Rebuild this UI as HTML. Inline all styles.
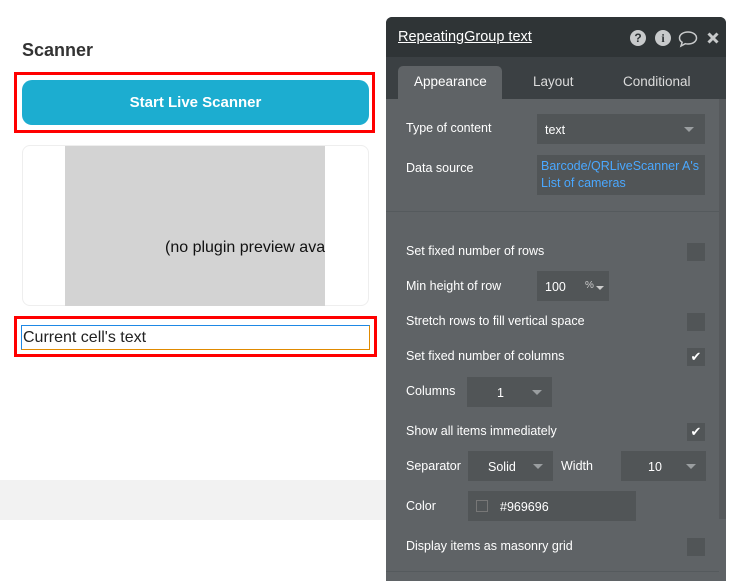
<!DOCTYPE html>
<html><head><meta charset="utf-8"><style>
*{margin:0;padding:0;box-sizing:border-box}
body{width:731px;height:581px;overflow:hidden;background:#fff;font-family:"Liberation Sans",sans-serif;position:relative}
.a{position:absolute}
.lbl{position:absolute;left:20px;color:#fff;font-size:12.5px}
.inp{position:absolute;background:#515557;color:#fff;font-size:12.5px}
.chk{position:absolute;left:301px;width:18px;height:18px;background:#515557;color:#fff;font-size:13px;text-align:center;line-height:18px}
.arr{position:absolute;width:0;height:0;border-left:5px solid transparent;border-right:5px solid transparent;border-top:5px solid #9a9ea0}
</style></head><body>
<div class="a" style="left:0;top:480px;width:386px;height:40px;background:#f2f2f2"></div>
<div class="a" style="left:22px;top:40px;font-size:18px;color:#333;font-weight:bold">Scanner</div>
<div class="a" style="left:14px;top:72px;width:361px;height:61px;border:3px solid #f00"></div>
<div class="a" style="left:22px;top:80px;width:347px;height:45px;background:#1cadd0;border-radius:10px;color:#fff;font-weight:bold;font-size:15px;text-align:center;line-height:45px">Start Live Scanner</div>
<div class="a" style="left:22px;top:145px;width:347px;height:161px;border:1px solid #eee;border-radius:8px"></div>
<div class="a" style="left:65px;top:146px;width:260px;height:160px;background:#d3d3d3;overflow:hidden"><div class="a" style="left:100px;top:93px;white-space:nowrap;font-size:16px;color:#111">(no plugin preview available)</div></div>
<div class="a" style="left:14px;top:316px;width:363px;height:41px;border:3px solid #f00"></div>
<div class="a" style="left:21px;top:325px;width:349px;height:25px;border:1px solid #1e88e5;border-right-color:#e08a00;border-bottom-color:#e08a00;font-size:16px;color:#222;line-height:23px;padding-left:1px">Current cell's text</div>

<div class="a" style="left:386px;top:17px;width:340px;height:564px;background:#5f6366;border-radius:6px 6px 0 0;overflow:hidden">
 <div class="a" style="left:0;top:0;width:340px;height:40px;background:#2f3436"></div>
 <div class="a" style="left:12px;top:12px;color:#fff;font-size:14.5px;text-decoration:underline">RepeatingGroup text</div>
 <div class="a" style="left:244px;top:13px;width:16px;height:16px;border-radius:50%;background:#c8cacb;color:#2f3436;font-size:12px;font-weight:bold;text-align:center;line-height:16px">?</div>
 <div class="a" style="left:269px;top:13px;width:16px;height:16px;border-radius:50%;background:#c8cacb;color:#2f3436;font-size:12px;font-weight:bold;text-align:center;line-height:16px;font-family:'Liberation Serif',serif">i</div>
 <svg class="a" style="left:292px;top:13px" width="20" height="18" viewBox="0 0 20 18"><path d="M10 2C5 2 1.5 4.7 1.5 8c0 1.8 1 3.3 2.6 4.3L3 16l4.3-2.3c.9.2 1.8.3 2.7.3 5 0 8.5-2.7 8.5-6S15 2 10 2z" fill="none" stroke="#c8cacb" stroke-width="1.5"/></svg>
 <svg class="a" style="left:321px;top:15px" width="12" height="12" viewBox="0 0 12 12"><path d="M1.5 1.5L10.5 10.5M10.5 1.5L1.5 10.5" stroke="#c8cacb" stroke-width="3"/></svg>
 <div class="a" style="left:0;top:40px;width:340px;height:42px;background:#3b4043"></div>
 <div class="a" style="left:12px;top:49px;width:104px;height:33px;background:#5f6366;border-radius:5px 5px 0 0"></div>
 <div class="a" style="left:28px;top:57px;color:#fff;font-size:13.5px">Appearance</div>
 <div class="a" style="left:147px;top:57px;color:#dcdcdc;font-size:13.5px">Layout</div>
 <div class="a" style="left:237px;top:57px;color:#dcdcdc;font-size:13.5px">Conditional</div>
 <div class="a" style="left:333px;top:82px;width:7px;height:420px;background:#56595c"></div>

 <div class="lbl" style="top:104px">Type of content</div>
 <div class="inp" style="left:151px;top:97px;width:168px;height:30px;padding:9px 0 0 8px">text</div>
 <div class="arr" style="left:298px;top:110px"></div>
 <div class="lbl" style="top:144px">Data source</div>
 <div class="inp" style="left:151px;top:138px;width:168px;height:40px;padding:3px 0 0 4px;color:#4aa8ff;line-height:17px">Barcode/QRLiveScanner A's<br>List of cameras</div>
 <div class="a" style="left:0;top:194px;width:333px;height:1px;background:#555a5d"></div>

 <div class="lbl" style="top:227px">Set fixed number of rows</div>
 <div class="chk" style="top:226px"></div>
 <div class="lbl" style="top:262px">Min height of row</div>
 <div class="inp" style="left:151px;top:254px;width:72px;height:30px;padding:9px 0 0 8px">100</div>
 <div class="a" style="left:199px;top:263px;color:#ccc;font-size:10px">%</div>
 <div class="arr" style="left:210px;top:269px;border-width:4px 4px 0 4px;border-top-color:#ccc"></div>
 <div class="lbl" style="top:297px">Stretch rows to fill vertical space</div>
 <div class="chk" style="top:296px"></div>
 <div class="lbl" style="top:332px">Set fixed number of columns</div>
 <div class="chk" style="top:331px">✔</div>
 <div class="lbl" style="top:367px">Columns</div>
 <div class="inp" style="left:81px;top:360px;width:85px;height:30px;padding:9px 0 0 30px">1</div>
 <div class="arr" style="left:146px;top:373px"></div>
 <div class="lbl" style="top:407px">Show all items immediately</div>
 <div class="chk" style="top:406px">✔</div>
 <div class="lbl" style="top:442px">Separator</div>
 <div class="inp" style="left:82px;top:434px;width:85px;height:30px;padding:9px 0 0 20px">Solid</div>
 <div class="arr" style="left:147px;top:447px"></div>
 <div class="a" style="left:175px;top:442px;color:#fff;font-size:12.5px">Width</div>
 <div class="inp" style="left:235px;top:434px;width:85px;height:30px;padding:9px 0 0 27px">10</div>
 <div class="arr" style="left:300px;top:447px"></div>
 <div class="lbl" style="top:482px">Color</div>
 <div class="inp" style="left:82px;top:474px;width:168px;height:30px;padding:9px 0 0 32px">#969696</div>
 <div class="a" style="left:90px;top:483px;width:12px;height:12px;border:1px solid #777"></div>
 <div class="lbl" style="top:522px">Display items as masonry grid</div>
 <div class="chk" style="top:521px"></div>
 <div class="a" style="left:0;top:554px;width:333px;height:1px;background:#555a5d"></div>
</div>
</body></html>
